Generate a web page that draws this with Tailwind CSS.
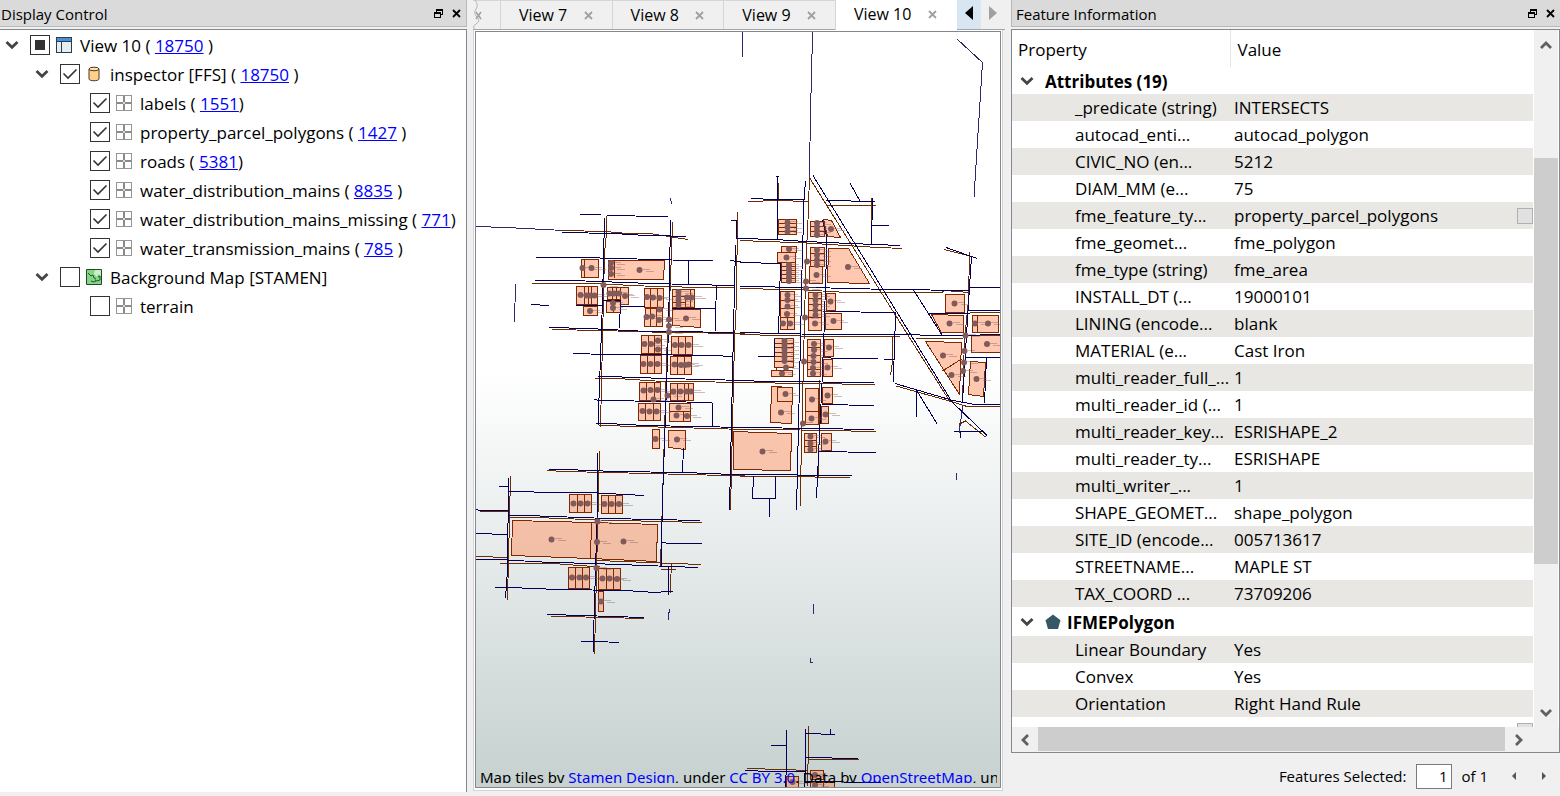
<!DOCTYPE html>
<html lang="en">
<head>
<meta charset="utf-8">
<title>Data Inspector</title>
<script src="https://cdn.jsdelivr.net/npm/@tailwindcss/browser@4"></script>
</head>
<body class="h-screen overflow-hidden bg-[#f0f0f0] font-['Open_Sans',sans-serif] text-[17px] text-black">
<svg class="hidden">
  <symbol id="chev" viewBox="0 0 14 10"><path d="M1.500 2 7 7.200 12.500 2" fill="none" stroke="#444" stroke-width="2.800"/></symbol>
  <symbol id="tick" viewBox="0 0 20 20"><path d="M3.500 9.500 8 14 16.500 5.500" fill="none" stroke="#333" stroke-width="1.600"/></symbol>
  <symbol id="grid" viewBox="0 0 16 16" shape-rendering="crispEdges"><path d="M.5.5h15v15H.5z" fill="#fff" stroke="#959595"/><path d="M8 1v14M1 8h14" stroke="#8a8a8a" stroke-width="2"/><path d="M7 7h2v2H7z" fill="#d8d8d8"/></symbol>
  <symbol id="restore" viewBox="0 0 9 9" shape-rendering="crispEdges"><path d="M2.500 3V.5h6v5H6M2 1h7M.5 3.500h5.500v5H.5zM0 4h6" fill="none" stroke="#000"/></symbol>
  <symbol id="cross" viewBox="0 0 9 9"><path d="M1 1l7 7M8 1 1 8" fill="none" stroke="currentColor" stroke-width="1.800"/></symbol>
  <symbol id="arrow" viewBox="0 0 12 8"><path d="M1 7 6 2l5 5" fill="none" stroke="#606060" stroke-width="2.800"/></symbol>
</svg>
<div class="flex h-full">

  <section class="flex w-[467px] shrink-0 flex-col pb-1">
    <header class="flex h-[27px] items-center border-b border-r border-[#b8b8b8] bg-[#dadada] pl-px pr-[5px]">
      <h2 class="flex-1 pt-[2px] text-[15px] leading-6">Display Control</h2>
      <button class="mr-[9px]" aria-label="Float panel"><svg class="size-[9px]"><use href="#restore"/></svg></button>
      <button aria-label="Close panel"><svg class="size-[9px]"><use href="#cross"/></svg></button>
    </header>
    <div id="tree" class="mt-[2px] flex-1 border-r border-t border-[#828790] bg-white"></div>
  </section>

  <section class="mx-[6px] flex min-w-0 flex-1 flex-col pb-[5px] pr-[3px]">
    <nav class="flex h-[30px] shrink-0 text-base">
      <div class="flex min-w-0 flex-1 items-stretch overflow-hidden border-b border-[#a5a5a5] bg-[#f0f0f0]">
        <div class="flex w-7 items-center border-r border-t border-[#d5d5d5]">
          <svg class="h-[30px] w-3" viewBox="0 0 12 30"><path d="M2 0q4 5 1 9t1 8-1 7 0 6" fill="none" stroke="#b5b5b5"/><path d="M3 12l5 7M8 12l-5 7" stroke="#a0a0a0" stroke-width="1.500"/></svg>
        </div>
        <div class="flex w-28 items-center justify-between border-r border-t border-[#d5d5d5] pl-[18px] pr-[19px]"><button>View 7</button><button class="text-[#a0a0a0]" aria-label="Close View 7"><svg class="size-[9px]"><use href="#cross"/></svg></button></div>
        <div class="flex w-28 items-center justify-between border-r border-t border-[#d5d5d5] pl-[18px] pr-[19px]"><button>View 8</button><button class="text-[#a0a0a0]" aria-label="Close View 8"><svg class="size-[9px]"><use href="#cross"/></svg></button></div>
        <div class="flex w-[111px] items-center justify-between border-t border-[#d5d5d5] pl-[18px] pr-[19px]"><button>View 9</button><button class="text-[#a0a0a0]" aria-label="Close View 9"><svg class="size-[9px]"><use href="#cross"/></svg></button></div>
      </div>
      <div class="flex w-[122px] items-center justify-between border-l border-[#d5d5d5] bg-white pb-[2px] pl-[18px] pr-5"><button>View 10</button><button class="text-[#a0a0a0]" aria-label="Close View 10"><svg class="size-[9px]"><use href="#cross"/></svg></button></div>
      <button class="flex w-6 items-center justify-center border-b border-[#a5a5a5] bg-[#d8e6f2] pb-1" aria-label="Scroll tabs left"><svg class="h-[14px] w-2" viewBox="0 0 8 14"><path d="M8 0v14L0 7z"/></svg></button>
      <button class="-mr-[3px] flex w-6 items-center justify-center border-b border-[#a5a5a5] pb-1" aria-label="Scroll tabs right"><svg class="h-[14px] w-2" viewBox="0 0 8 14"><path d="M0 0v14l8-7z" fill="#a0a0a0"/></svg></button>
    </nav>
    <div class="-mr-[1px] flex min-h-0 flex-1 border-b border-r border-l border-[#d5d5d5] bg-white pb-[2px] pl-[1px] pr-[1px] pt-[1px]">
      <div class="relative flex-1 overflow-hidden border border-[#828790] bg-linear-to-b from-white from-45% to-[#c6d1d0]">
        <svg class="absolute inset-0 size-full" role="img" aria-label="Map of parcels, roads and water mains">
          <g transform="translate(-476 -32)" fill="none" shape-rendering="crispEdges">
            <path id="parcels" fill="#ff8c5a" fill-opacity=".47" stroke="#7d2800" d="M581.500 259.500h17v18h-17zM584.500 259v18M608.500 260.500h56l-1 19h-55zM614.500 260v18M576.500 286.500h21v18h-21zM584.500 286v18M588.500 286v18M591.500 286v18M583.500 306.500h14v9h-14zM607.500 287.500h21v17h-8v-5h-13zM612.500 287v12M616.500 287v12M620.500 287v12M606.500 301.500h14v11h-14zM613.500 301v11M644.500 288.500h19v19h-19zM650.500 288v19M657.500 288v19M645.500 308.500h17v18h-18zM650.500 308v18M656.500 308v18M672.500 289.500h22v18h-22zM678.500 289v18M685.500 295v12M690.500 289v18M672.500 296.500h13M672.500 302.500h13M672.500 309.500h28v18l-28-2zM641.500 335.500h20v18h-20zM648.500 335v18M654.500 335v18M671.500 336.500h21v18h-21zM678.500 336v18M685.500 336v18M640.500 355.500h21v18h-21zM647.500 355v18M654.500 355v18M670.500 356.500h21v18h-21zM677.500 356v18M684.500 356v18M639.500 382.500h21v18h-21zM646.500 382v18M654.500 382v18M670.500 383.500h23v17h-23zM677.500 383v17M684.500 383v17M688.500 383v17M638.500 403.500h22v17h-22zM645.500 403v17M653.500 403v17M669.500 403.500h21v18h-21zM669 411.500h21M683.500 411v10M652.500 429.500h7v19h-7zM668.500 430.500h17v19l-17-2zM733.500 431.500l58 2-1 37-57-1zM569.500 494.500h22v18h-22zM577.500 494v18M584.500 494v18M601.500 495.500h21v18h-21zM608.500 495v18M615.500 495v18M512.500 520.500l79 2-1 36-79-3zM591.500 522.500l66 2-1 37-66-3zM568.500 567.500h21v21h-21zM575.500 567v21M582.500 567v21M598.500 568.500h22v21h-22zM606.500 568v21M613.500 568v21M598.500 591.500h5v20h-5zM778.500 219.500h18v15h-18zM778 223.500h18M778 227.500h18M778 231.500h18M810.500 221.500h14v15h-14zM810 226.500h14M810 231.500h14M823.500 219.500l8 1 9 17-13-1zM781.500 246.500h15v6h-15zM777.500 252.500h18v10h-18zM781.500 262.500h14v20h-14zM781 266.500h14M781 270.500h14M781 274.500h14M781 278.500h14M810.500 247.500h14v19h-14zM810 253.500h14M810 260.500h14M809.500 266.500h13v17h-13zM828.500 248.500h20l21 35-42-1zM780.500 291.500h14v38h-14zM780 300.500h14M780 308.500h14M780 317.500h14M787.500 318v11M808.500 292.500h13v38h-13zM808 298.500h13M808 304.500h13M808 310.500h13M808 317.500h13M826.500 293.500h9v17h-9zM825.500 313.500h16v16h-16zM945.500 294.500h19v18h-19zM931.500 314.500l32 1v17h-22zM972.500 315.500h26v17h-26zM977.500 315v17M971.500 335.500h30v17h-30zM774.500 338.500h19v29h-19zM774 343.500h19M774 347.500h19M774 352.500h19M774 356.500h19M774 361.500h19M776.500 367v4M771.500 370.500h21v6h-21zM807.500 339.500h13v37h-13zM807 347.500h13M807 355.500h13M807 362.500h13M807 369.500h13M824.500 339.500h9v17h-9zM823.500 359.500h9v17h-9zM771.500 386.500l21 1-1 36-21-1zM777.500 387.500h15v14h-15zM805.500 388.500h13v36h-13zM805 411.500h13M822.500 387.500h10v16h-10zM821.500 406.500h7v17h-7zM804.500 433.500h12v19h-12zM804 440.500h12M804 446.500h12M821.500 433.500h10v17h-10zM925.500 341.500l36 1-2 52zM942.500 371l19-12M970.500 361.500l15 1-2 34-15-2zM786.500 776.500h12v14h-12zM810.500 770.500h13v9h-13zM810.500 782.500h24v9h-24zM823.500 782v8"/>
            <path stroke="#6e2d00" d="M563 230.500l42 1 23 2 25 .5 35 5.500M606.500 216v17l-2 20-2 87-2 87M672.500 222l-1 31-3 77M532 283.500l70 .5 53 2.500 80 1.500M552 329.500l48 1 68 2 77 1M737.500 212l-1 88-2 40-4 170M595 378.500l30 .5 30 2 90 1.500M599 425.500l41 1 71 2 34 1M547 470.500l18 1 63 1.500 117 3M599.500 451l-5 203M510.500 476l-3 124M509 517.500h27l64 2.500 102 2.500M480 511.500h28M476 556.500l33 1M500 563.500l60 .5 40 3M597 560.500l104 4M671.500 564l-1.500 29M661 569.500h15M551 616.500l34 .5 59 1.500M667.500 330l-5 170-2 66M778.500 183v17M748 201.500l30-1 30 1M809.500 177l-1.500 43-2 40-2 80-4 167M809 177l102 163 38 60M826 205.500h50M871 198v46M740 240.500l66 2.500 64 4 32 1.500M740 288.500l66 1.500 41 2.500 94 .5 4-2.500 24 2M892.500 336v26l-2 13M740 334.500l60 1.500h100M944 249.500l28 7M969.500 252l-1 48-4 40-2 60M970 312.500h30M820 380l-1.500 97M740 382.500l135 2M740 429.500l60 .5 76 1.500M740 476.500l75 .5 35 1M896 386l57 16 14 4.500h33M959.500 433v-9l6-3 20 16M916 338.500h47M808.500 726v18l-1 42M808 759.500h51M747 768.500l36 1 25 1M966 357.500h34"/>
            <path stroke="#00005a" d="M580 214.500l21 .5M607 215.500l28 .5 33 .5M562 232.500l52 1 24 1.500 48 1.500M604.500 218l-2 82-1 30-3.500 96M536 257.500l64 .5 37 1 35 1 41 .5M535 280.500h37l66 2.500 50 1.500 47 1M531 304.500l18 1M576 305.500h27M603 300.500h17.500l-1 27.500M621 306.500h24M549 327.500l39 1 50 2.500 97 1.500M670.500 220l-2 110-6 170-1.500 67M688.500 260v24M716.500 286l-1.500 46M672 308.500h43M731 220.500h5v18h9M735.500 245l-2 85-4 180M730 260.500l15 2M573 353.500l17 .5 123 1.500 19 1M598 376.500l24 .5 43 1.500 80 2M594 399.500l6 1 34 .5 78 1.500 1 24.500M596 423.500l21 .5 28 1.500 100 2M549 469.500l29 .5 37 1.500 70 1 60 2.500M597.500 453l-.5 67-4 133M683.500 448l-1 24M499 486.500h9M508.500 478l-1 92-2 28M509 491.500l49 1 39 .5 47 2.500M476 509.500l4 1h28M509 515.500l31 .5 68 2.500 92 2M476 533.500l32 1M662 542.500l8 1h32M476 559l22 .5 44 2.500 63 2 93 3.500M495 587.500l27 .5 36 1.500 67 1 30 2 18-1.500M668.500 567v28M547 614.500l19 .5 78 2.500M581 641.500h27M609 642.500h10M776 176.500h3M777.500 176v63M751 198.500l24 1h29M805.500 181l-1.500 19-2 70-1.500 70-4 170M813 175.500l101 164.500 38 62 35 33.500M826 200.500l49 1M850 183l10 18M872.500 198l-1 46M872 225.500h17M740 238.500l35 1 31 2 44 2 50 2M740 262.500l40.500 1-2 70.500M740 286.500l70 1 80 2 79 1M970 287.500h30M913.500 290l28.500 45M823 311.500l73 1-1.500 27.500-1 42M884 359.500h10M740 332.500l60 1.500 80 .5 80 1 40-1M946 247.500l31 11M971.500 256l-5 79-4 67M928 313.500h42M969 310.500h31M822.500 220l4.500 18-3 95-2 50-5.500 115M758 356.500h16v-18M822 357.500l18 1h38M740 380.500l28 1 106 1M822 404.500l52 1M740 427.500l42 .5 92 1.500M818 451.500l58 1M740 474.500l112 1M753.500 476l-1 22.500h23V476M769.500 498v19M895 383.500l58 17 22 4h25M916.500 390v27M917 391l20.500 33.500M954 431.500h29M960.500 431v7M965 357.500h35M986.500 358l-2 45M786.500 730v34l-1 23M771 745.500h15M805.500 729v30l-1 28M806 733.500l29 1M830.500 729v5M805 757.500l53 1M745 770.500l26 1h35M805 781.500l76 1"/>
            <path stroke="#32286e" d="M476 226.500l30 1 58 3M670.500 198l1 6M515.500 284l-1 38M742.500 32v25M812.500 32l-1 45-1 32-1 68M957 39l25.500 23.500-8.500 134.500M956.500 473v7M669.500 609l-1.500 11M813.500 604v10M810.500 658v4h2M963 405l-4 28"/>
            <path id="notes" stroke="#825a5a" stroke-opacity=".4"/>
            <path id="dots" stroke="#825a5a" stroke-width="6" stroke-linecap="round" shape-rendering="auto"/>
          </g>
        </svg>
        <p class="absolute bottom-1 left-1 right-[3px] h-[15px] overflow-hidden whitespace-nowrap font-['Noto_Sans',sans-serif] text-[15px] leading-[18px]">Map tiles by <a href="#" class="text-[#0000ff]">Stamen Design</a>, under <a href="#" class="text-[#0000ff]">CC BY 3.0</a>. Data by <a href="#" class="text-[#0000ff]">OpenStreetMap</a>, under ODbL</p>
      </div>
    </div>
  </section>

  <section class="flex w-[549px] shrink-0 flex-col">
    <header class="flex h-[27px] shrink-0 items-center border-b border-l border-[#b8b8b8] bg-[#dadada] pl-1 pr-[5px]">
      <h2 class="flex-1 pt-[2px] text-[15px] leading-6">Feature Information</h2>
      <button class="mr-[9px]" aria-label="Float panel"><svg class="size-[9px]"><use href="#restore"/></svg></button>
      <button aria-label="Close panel"><svg class="size-[9px]"><use href="#cross"/></svg></button>
    </header>
    <div class="mt-[2px] flex min-h-0 flex-1 flex-col border border-[#828790] bg-white">
      <div class="flex min-h-0 flex-1">
        <div class="flex-1 overflow-hidden">
          <table class="w-full table-fixed border-collapse text-left">
            <colgroup><col class="w-[218px]"><col></colgroup>
            <thead><tr class="h-[37px]"><th class="border-r border-[#e5e5e5] py-0 pl-[6px] pt-[2px] font-normal">Property</th><th class="py-0 pl-[7px] pt-[2px] font-normal">Value</th></tr></thead>
            <tbody id="props"></tbody>
          </table>
        </div>
        <div class="mx-px flex w-6 flex-col items-center bg-[#f0f0f0]">
          <button class="flex h-[30px] items-center" aria-label="Scroll up"><svg class="h-2 w-3"><use href="#arrow"/></svg></button>
          <div class="mt-[98px] h-[406px] w-full bg-[#cdcdcd]"></div>
          <button class="mb-1 mt-auto flex h-5 items-center" aria-label="Scroll down"><svg class="h-2 w-3 rotate-180"><use href="#arrow"/></svg></button>
        </div>
      </div>
      <div class="flex h-[25px] shrink-0 items-center bg-[#f0f0f0]">
        <button class="flex w-[26px] justify-center" aria-label="Scroll left"><svg class="h-2 w-3 -rotate-90"><use href="#arrow"/></svg></button>
        <div class="h-6 flex-1 self-start bg-[#cdcdcd]"></div>
        <button class="mr-[26px] flex w-7 justify-center" aria-label="Scroll right"><svg class="h-2 w-3 rotate-90"><use href="#arrow"/></svg></button>
      </div>
    </div>
    <footer class="flex h-[43px] shrink-0 items-center justify-end pr-[14px] pt-[3px] text-[15px]">
      <label for="sel" class="mr-[10px]">Features Selected:</label>
      <input id="sel" value="1" class="h-[25px] w-9 border border-[#7a7a7a] bg-white pr-1 text-right">
      <span class="ml-[9px] mr-6">of 1</span>
      <button class="mr-[26px]" aria-label="Previous feature"><svg class="h-2 w-1" viewBox="0 0 4 8"><path d="M4 0v8L0 4z" fill="#555"/></svg></button>
      <button aria-label="Next feature"><svg class="h-2 w-1" viewBox="0 0 4 8"><path d="M0 0v8l4-4z" fill="#555"/></svg></button>
    </footer>
  </section>
</div>
<script>
const icons = {
  view: '<svg class="size-4" viewBox="0 0 16 16" shape-rendering="crispEdges"><path d="M.5.5h15v15H.5z" fill="#e6edf2" stroke="#2b3d4a"/><path d="M1 1h14v3H1z" fill="#4a90d9"/><path d="M1 4.500h14M5.500 5v10" stroke="#2b3d4a"/></svg>',
  db: '<svg class="size-4" viewBox="0 0 16 16"><path d="M3 3v10c0 2.300 10 2.300 10 0V3" fill="#ffd08a" stroke="#4a3a2a"/><ellipse cx="8" cy="3" rx="5" ry="1.800" fill="#ffe0a8" stroke="#4a3a2a"/></svg>',
  grid: '<svg class="size-4"><use href="#grid"/></svg>',
  map: '<svg class="size-4" viewBox="0 0 16 16"><path d="M.5.5h15v15H.5z" fill="#86d486" stroke="#1f4a2a"/><path d="M9 1h6v6l-3-2-1 3-3-3z" fill="#c8f0c0"/><path d="M2 4l3 3 2-1 1 3 2 1M9 11l2 1 3-1V7l-2 1M5 12l3 1 2-1" fill="none" stroke="#1f5a30"/></svg>'
};
const tree = [
  [0, 'part', 'view', 'View 10', '18750', ' )', true],
  [1, 'on', 'db', 'inspector [FFS]', '18750', ' )', true],
  [2, 'on', 'grid', 'labels', '1551', ')'],
  [2, 'on', 'grid', 'property_parcel_polygons', '1427', ' )'],
  [2, 'on', 'grid', 'roads', '5381', ')'],
  [2, 'on', 'grid', 'water_distribution_mains', '8835', ' )'],
  [2, 'on', 'grid', 'water_distribution_mains_missing', '771', ')'],
  [2, 'on', 'grid', 'water_transmission_mains', '785', ' )'],
  [1, 'off', 'map', 'Background Map [STAMEN]', '', '', true],
  [2, 'off', 'grid', 'terrain', '', '']
];
const indent = ['pl-[5px]', 'pl-[35px]', 'pl-[65px]'];
const chev = '<svg class="h-[10px] w-[14px]"><use href="#chev"/></svg>';
document.getElementById('tree').innerHTML = tree.map(([d, s, ic, name, n, end, open], i) =>
  `<div class="flex h-[29px] items-center ${indent[d]}">
    <div class="w-[25px]">${open ? `<button class="flex" aria-label="Collapse ${name}">${chev}</button>` : ''}</div>
    <span class="grid size-5 shrink-0"><input id="t${i}" type="checkbox" ${s === 'on' ? 'checked' : ''} class="size-5 appearance-none border border-[#333] bg-white [grid-area:1/1]">${
      s === 'on' ? '<svg class="pointer-events-none size-5 [grid-area:1/1]"><use href="#tick"/></svg>' :
      s === 'part' ? '<i class="pointer-events-none m-auto size-[10px] bg-[#333] [grid-area:1/1]"></i>' : ''}</span>
    <span class="ml-[6px] mr-2">${icons[ic]}</span>
    <label for="t${i}" class="whitespace-pre pt-[2px]">${name}</label>${n ? `<span class="whitespace-pre pt-[2px]"> ( <a href="#" class="text-[#0000ff] underline">${n}</a>${end}</span>` : ''}
  </div>`).join('');

const attrs = [['_predicate (string)', 'INTERSECTS'], ['autocad_enti...', 'autocad_polygon'], ['CIVIC_NO (en...', '5212'], ['DIAM_MM (e...', '75'],
  ['fme_feature_ty...', 'property_parcel_polygons', 1], ['fme_geomet...', 'fme_polygon'], ['fme_type (string)', 'fme_area'], ['INSTALL_DT (...', '19000101'],
  ['LINING (encode...', 'blank'], ['MATERIAL (e...', 'Cast Iron'], ['multi_reader_full_...', '1'], ['multi_reader_id (...', '1'], ['multi_reader_key...', 'ESRISHAPE_2'],
  ['multi_reader_ty...', 'ESRISHAPE'], ['multi_writer_...', '1'], ['SHAPE_GEOMET...', 'shape_polygon'], ['SITE_ID (encode...', '005713617'],
  ['STREETNAME...', 'MAPLE ST'], ['TAX_COORD ...', '73709206']];
const geom = [['Linear Boundary', 'Yes'], ['Convex', 'Yes'], ['Orientation', 'Right Hand Rule'], ['', '', 1]];
const row = ([k, v, b]) => `<tr class="h-[27px] odd:bg-[#e8e7e3]"><td class="whitespace-nowrap py-0 pl-[63px] leading-[27px]">${k}</td><td class="py-0 pl-1 leading-[27px]"><div class="flex h-[27px] items-center justify-between"><span>${v}</span>${b ? '<button class="size-4 border border-[#b0b0b0] bg-[#e1e1e1]" aria-label="More"></button>' : ''}</div></td></tr>`;
const head = (t, ic) => `<tr><th colspan="2" class="p-0"><div class="flex items-center pl-2 ${ic ? 'h-[29px]' : 'h-[27px]'}"><button class="mr-[11px]" aria-label="Collapse ${t}">${chev}</button>${ic}<span class="pt-[2px]">${t}</span></div></th></tr>`;
const pent = '<svg class="mr-[6px] size-4" viewBox="0 0 16 16"><path d="M8 .5 15.500 6.200 13 15H3L.5 6.200z" fill="#375766"/></svg>';
const body = document.getElementById('props');
body.insertAdjacentHTML('beforebegin', `<tbody>${head('Attributes (19)', '')}</tbody><tbody>${attrs.map(row).join('')}</tbody><tbody>${head('IFMEPolygon', pent)}</tbody><tbody>${geom.map(row).join('')}</tbody>`);
body.remove();

const points = `582.5,268 591.5,268 611,263 611,268 611,274 639.5,270 603.5,285 580.5,295 586.5,295.5 590.5,295.5 594.5,295.5 590,311 609.5,293.5 614,293.5 619,293.5 625,296 613,303 613,308 647,297 653,297.5 659.5,298 646.5,317 652,316.5 659,320 659.5,309.5 678.5,292 678.5,296 678.5,300 678.5,305 687,297.5 691.5,297.5 686,318.5 669,319.5 669,326 669,332
644.5,344 651,344 658,340.5 658,349.5 675,345 681.5,345 688.5,345 643.5,364 650.5,364 657.5,364 674.5,364.5 681,365 685,365 688.5,364.5 643.5,390.5 650.5,390 657.5,390 673.5,391.5 680.5,391.5 686.5,391.5 691,391.5 667.5,395.5 653.5,399.5 642.5,411 649.5,411.5 656.5,411.5 678.5,407.5 676.5,415.5 687,416 655.5,439 677,439.5
573.5,503.5 580.5,503.5 587.5,503.5 604.5,504 611.5,504 619,504 597.5,521.5 597,542 551.5,539.5 623.5,541.5 596.5,568 572,577.5 579.5,577.5 586,577.5 602.5,578.5 609.5,578.5 617,579 601,601.5
787.5,222.5 787.5,227 787.5,231.5 817,223 817,227 817,231 817,235 831,229 789,249 786.5,257.5 789,265 789,269 789,273 789,277 789,281 817,250 817,255 817,260 817,265 816.5,275 848,267 807,261.5 806,281.5 806,288.5 805,317.5 787.5,295 787.5,300 787.5,306.5 787,314 783,323.5 790,323.5 815.5,295 815.5,300 815.5,305 815.5,310 815.5,315 815,323.5 830.5,301.5 833.5,321 954.5,303.5 949.5,323.5 975,323.5 988,323.5 965.5,335.5
784.5,341 784.5,345 784.5,349 784.5,353 784.5,357 784.5,361 786,367.5 782,373.5 814,344 814,350 813.5,356 813.5,362 813,368 813,373.5 829,347.5 827.5,367.5 804,361.5 785.5,394 781,412.5 812,399.5 811.5,418.5 827.5,395.5 825.5,414.5 803,423.5 762.5,451.5 810.5,436.5 810.5,443.5 810.5,449.5 825.5,441.5 943,355.5 951.5,375 987,344 976.5,379 964.5,351 964,362.5 963,371 792.5,782 815,775 815,785`.split(/\s+/).map(p => p.split(',').map(Number));
document.getElementById('dots').setAttribute('d', points.map(([x, y]) => `M${x} ${y}h.01`).join(''));
document.getElementById('notes').setAttribute('d', points.map(([x, y]) => `M${x + 3} ${Math.floor(y) - .5}h7m-4 2h8`).join(''));
</script>
</body>
</html>
